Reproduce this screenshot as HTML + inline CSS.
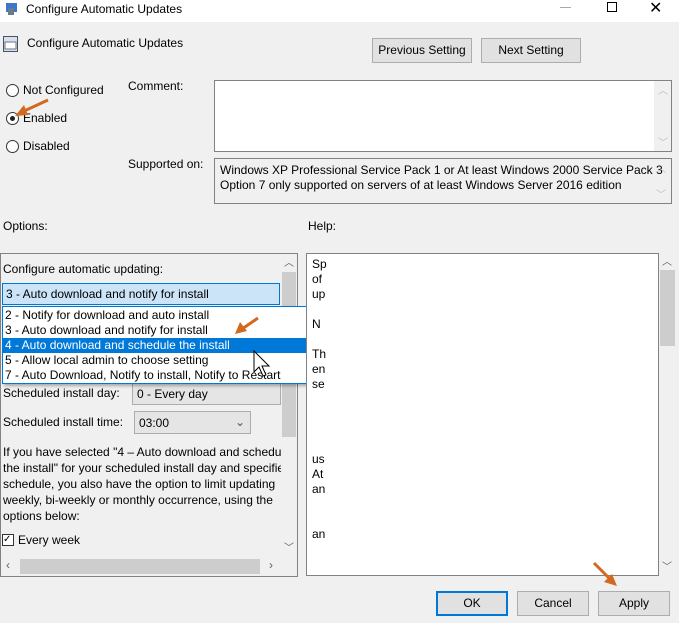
<!DOCTYPE html>
<html><head><style>
*{box-sizing:border-box;margin:0;padding:0}
body{width:679px;height:623px;background:#f0f0f0;font-family:"Liberation Sans",sans-serif;font-size:12px;color:#000;position:relative;overflow:hidden}
.a{position:absolute;white-space:nowrap}
.btn{position:absolute;background:#e1e1e1;border:1px solid #adadad;text-align:center;line-height:23px}
.box{position:absolute;background:#fff;border:1px solid #828282}
.rad{position:absolute;width:13px;height:13px;border:1px solid #333;border-radius:50%;background:#fff}
.sb{position:absolute;background:#f0f0f0}
.dd div{height:15px;line-height:15px;padding-left:2px}
.ar{position:absolute;font-size:10px;color:#606060;line-height:10px}
.arl{position:absolute;font-size:10px;color:#bbb;line-height:10px}
</style></head><body>
<div class="a" style="left:0;top:0;width:679px;height:22px;background:#fff"></div>
<svg class="a" style="left:5px;top:2px" width="14" height="14"><rect x="1" y="1" width="11" height="9" fill="#3a78c8"/><rect x="3" y="6" width="6" height="7" fill="#6a7a8a"/></svg>
<div class="a" style="left:26px;top:2px;font-size:12px">Configure Automatic Updates</div>
<div class="a" style="left:560px;top:7px;width:11px;height:1px;background:#aaa"></div>
<div class="a" style="left:607px;top:2px;width:10px;height:10px;border:1px solid #000"></div>
<div class="a" style="left:649px;top:-2px;font-size:16px">✕</div>
<svg class="a" style="left:3px;top:36px" width="16" height="16"><rect x="0.5" y="0.5" width="14" height="15" fill="#dde" stroke="#456"/><rect x="2" y="6" width="11" height="7" fill="#fff" stroke="#678"/></svg>
<div class="a" style="left:27px;top:36px;font-size:12px">Configure Automatic Updates</div>
<div class="btn" style="left:372px;top:38px;width:100px;height:25px">Previous Setting</div>
<div class="btn" style="left:481px;top:38px;width:100px;height:25px">Next Setting</div>
<div class="rad" style="left:6px;top:84px"></div><div class="a" style="left:23px;top:83px">Not Configured</div>
<div class="rad" style="left:6px;top:112px"><div style="position:absolute;left:3px;top:3px;width:5px;height:5px;border-radius:50%;background:#222"></div></div><div class="a" style="left:23px;top:111px">Enabled</div>
<div class="rad" style="left:6px;top:140px"></div><div class="a" style="left:23px;top:139px">Disabled</div>
<div class="a" style="left:128px;top:79px">Comment:</div>
<div class="a" style="left:128px;top:157px">Supported on:</div>
<div class="box" style="left:214px;top:80px;width:458px;height:72px"><div class="sb" style="right:0;top:0;width:17px;height:70px"><div class="arl" style="left:4px;top:6px">︿</div><div class="arl" style="left:4px;top:58px">﹀</div></div></div>
<div class="box" style="left:214px;top:158px;width:458px;height:46px;background:#f0f0f0;padding:4px 0 0 5px;line-height:15px">Windows XP Professional Service Pack 1 or At least Windows 2000 Service Pack 3<br>Option 7 only supported on servers of at least Windows Server 2016 edition<div class="arl" style="left:441px;top:6px">︿</div><div class="arl" style="left:441px;top:32px">﹀</div></div>
<div class="a" style="left:3px;top:219px">Options:</div>
<div class="a" style="left:308px;top:219px">Help:</div>
<div class="box" style="left:0;top:253px;width:298px;height:324px;background:#f0f0f0"></div>
<div class="a" style="left:3px;top:262px">Configure automatic updating:</div>
<div class="a" style="left:2px;top:283px;width:278px;height:22px;background:#cce4f7;border:1px solid #0078d7;padding:3px 0 0 3px">3 - Auto download and notify for install</div>
<div class="sb" style="left:281px;top:254px;width:16px;height:303px;background:#f0f0f0"><div style="position:absolute;left:1px;top:18px;width:14px;height:165px;background:#cdcdcd"></div><div class="ar" style="left:3px;top:5px">︿</div><div class="ar" style="left:3px;top:290px">﹀</div></div>
<div class="a" style="left:3px;top:386px">Scheduled install day:</div>
<div class="a" style="left:132px;top:383px;width:149px;height:22px;background:#e5e5e5;border:1px solid #adadad;padding:3px 0 0 4px">0 - Every day</div>
<div class="a" style="left:3px;top:415px">Scheduled install time:</div>
<div class="a" style="left:134px;top:411px;width:117px;height:23px;background:#e5e5e5;border:1px solid #adadad;padding:4px 0 0 4px">03:00<span style="position:absolute;left:100px;top:3px;color:#555">⌄</span></div>
<div class="a" style="left:3px;top:444px;width:278px;overflow:hidden;line-height:16px">If you have selected "4 – Auto download and schedule<br>the install" for your scheduled install day and specified<br>schedule, you also have the option to limit updating<br>weekly, bi-weekly or monthly occurrence, using the<br>options below:</div>
<div class="a" style="left:2px;top:534px;width:12px;height:12px;border:1px solid #333;background:#fff;font-size:10px;line-height:10px">✓</div>
<div class="a" style="left:18px;top:533px">Every week</div>
<div class="a" style="left:1px;top:557px;width:280px;height:19px;background:#f0f0f0"><div style="position:absolute;left:19px;top:2px;width:240px;height:15px;background:#cdcdcd"></div><div class="ar" style="left:5px;top:3px;font-size:12px">‹</div><div class="ar" style="left:268px;top:3px;font-size:12px">›</div></div>
<div class="a dd" style="left:2px;top:306px;width:314px;height:78px;background:#fff;border:1px solid #0078d7;box-shadow:2px 2px 3px rgba(0,0,0,.3);padding-top:1px">
<div>2 - Notify for download and auto install</div>
<div>3 - Auto download and notify for install</div>
<div style="background:#0078d7;color:#fff">4 - Auto download and schedule the install</div>
<div>5 - Allow local admin to choose setting</div>
<div>7 - Auto Download, Notify to install, Notify to Restart</div>
</div>
<div class="box" style="left:306px;top:253px;width:353px;height:323px;overflow:hidden;padding:3px 0 0 5px;line-height:15px">Sp<br>of<br>up<br><br>N<br><br>Th<br>en<br>se<br><br><br><br><br>us<br>At<br>an<br><br><br>an</div>
<div class="sb" style="left:659px;top:253px;width:17px;height:323px"><div style="position:absolute;left:1px;top:17px;width:15px;height:76px;background:#cdcdcd"></div><div class="ar" style="left:3px;top:5px">︿</div><div class="ar" style="left:3px;top:310px">﹀</div></div>
<div class="btn" style="left:436px;top:591px;width:72px;height:25px;border:2px solid #0078d7;line-height:21px">OK</div>
<div class="btn" style="left:517px;top:591px;width:72px;height:25px">Cancel</div>
<div class="btn" style="left:598px;top:591px;width:72px;height:25px">Apply</div>
<svg class="a" style="left:0;top:0" width="679" height="623">
<g stroke="#d2691e" stroke-width="3" fill="#d2691e">
<line x1="48" y1="100" x2="22" y2="112"/><polygon points="15,116 24,105 28,115" stroke="none"/>
<line x1="258" y1="318" x2="242" y2="329"/><polygon points="235,334 240,322 247,331" stroke="none"/>
<line x1="594" y1="563" x2="610" y2="579"/><polygon points="617,586 604,582 612,574" stroke="none"/>
</g>
<path d="M254 351 L254 372 L259 367 L263 376 L266 375 L262 366 L269 366 Z" fill="#fff" stroke="#000"/>
</svg>
</body></html>
